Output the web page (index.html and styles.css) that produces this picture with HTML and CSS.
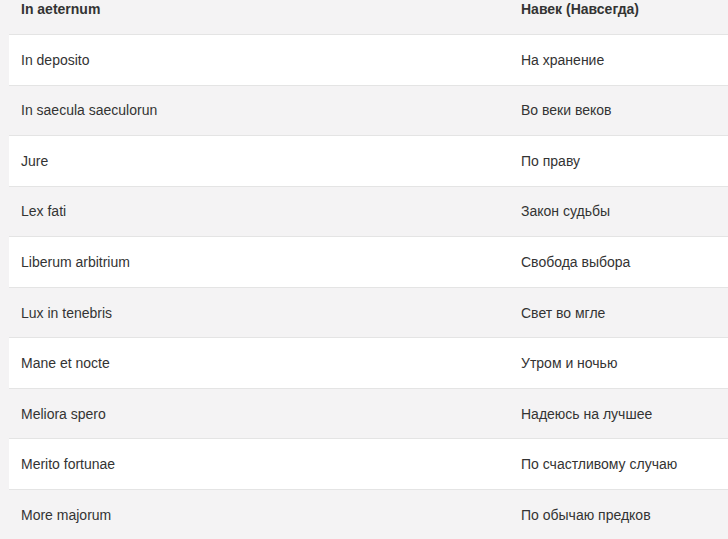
FILE: index.html
```html
<!DOCTYPE html>
<html>
<head>
<meta charset="utf-8">
<link rel="stylesheet" href="styles.css">
</head>
<body>
<table class="phrases">
  <tbody>
    <tr class="head"><td>In aeternum</td><td>Навек (Навсегда)</td></tr>
    <tr class="light"><td>In deposito</td><td>На хранение</td></tr>
    <tr><td>In saecula saeculorun</td><td>Во веки веков</td></tr>
    <tr class="light"><td>Jure</td><td>По праву</td></tr>
    <tr><td>Lex fati</td><td>Закон судьбы</td></tr>
    <tr class="light"><td>Liberum arbitrium</td><td>Свобода выбора</td></tr>
    <tr><td>Lux in tenebris</td><td>Свет во мгле</td></tr>
    <tr class="light"><td>Mane et nocte</td><td>Утром и ночью</td></tr>
    <tr><td>Meliora spero</td><td>Надеюсь на лучшее</td></tr>
    <tr class="light"><td>Merito fortunae</td><td>По счастливому случаю</td></tr>
    <tr><td>More majorum</td><td>По обычаю предков</td></tr>
  </tbody>
</table>
</body>
</html>
```
FILE: styles.css
```css
html, body {
  margin: 0;
  padding: 0;
  background: #f4f3f4;
  overflow: hidden;
}
body {
  padding-left: 9px;
  font-family: "Liberation Sans", Arial, sans-serif;
  font-size: 14px;
  color: #333;
}
.phrases {
  border-collapse: collapse;
  width: 740px;
  margin-top: -17px;
  table-layout: fixed;
}
.phrases td {
  padding: 0 12px;
  height: 50.56px;
  line-height: 20px;
  border-top: 1px solid #e4e4e4;
  vertical-align: middle;
  box-sizing: border-box;
}
.phrases td:first-child {
  width: 500px;
}
.phrases .head td {
  font-weight: bold;
  border-top: none;
  height: 51.56px;
}
.phrases .light td {
  background: #fff;
}
```
